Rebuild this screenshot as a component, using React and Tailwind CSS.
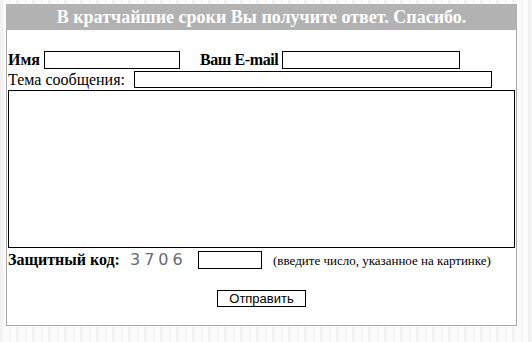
export default function App() {
  return (
    <div className="w-[532px] h-[342px] overflow-hidden bg-[#f8f8f8] bg-[repeating-linear-gradient(90deg,#f2f2f2_0px,#f2f2f2_3px,#fafafa_3px,#fafafa_9px,#f5f5f5_9px,#f5f5f5_11px,#fcfcfc_11px,#fcfcfc_16px)] font-['Liberation_Serif',serif] text-black">
      <div className="ml-[6px] pt-[4px] w-[511px]">
        <div className="h-[26px] bg-[#b2b2b2] text-white font-bold text-[18px] leading-[26px] text-center whitespace-nowrap">
          В кратчайшие сроки Вы получите ответ. Спасибо.
        </div>
        <div className="bg-white border-l border-r border-b border-[#a9a9a9] pl-[1px] pt-[21px] pb-[18px]">
          <div className="flex items-center h-[18px] text-[16px] leading-none whitespace-nowrap">
            <span className="w-[36px] shrink-0 font-bold">Имя</span>
            <div className="w-[136px] shrink-0 h-[18px] border border-black bg-white" />
            <span className="ml-[20px] w-[82px] shrink-0 font-bold tracking-[-0.4px]">Ваш E-mail</span>
            <div className="w-[178px] shrink-0 h-[18px] border border-black bg-white" />
          </div>
          <div className="flex items-center h-[17px] mt-[2px] text-[16px] leading-none whitespace-nowrap">
            <span className="w-[126px] shrink-0">Тема сообщения:</span>
            <div className="w-[358px] shrink-0 h-[17px] border border-black bg-white" />
          </div>
          <div className="mt-[2px] w-[507px] h-[158px] border border-black bg-white" />
          <div className="flex items-center h-[18px] mt-[3px] text-[16px] leading-none whitespace-nowrap">
            <span className="w-[122px] shrink-0 font-bold">Защитный код:</span>
            <span className="w-[68px] shrink-0 font-['DejaVu_Sans',sans-serif] text-[16px] text-[#6a6a6a] tracking-[4px]">3706</span>
            <div className="w-[64px] shrink-0 h-[18px] border border-black bg-white" />
            <span className="ml-[11px] text-[13px]">(введите число, указанное на картинке)</span>
          </div>
          <div className="flex mt-[21px] pl-[209px]">
            <div className="w-[89px] h-[17px] border border-black bg-white font-['Liberation_Sans',sans-serif] text-[13px] leading-[15px] text-center">
              Отправить
            </div>
          </div>
        </div>
      </div>
    </div>
  );
}
